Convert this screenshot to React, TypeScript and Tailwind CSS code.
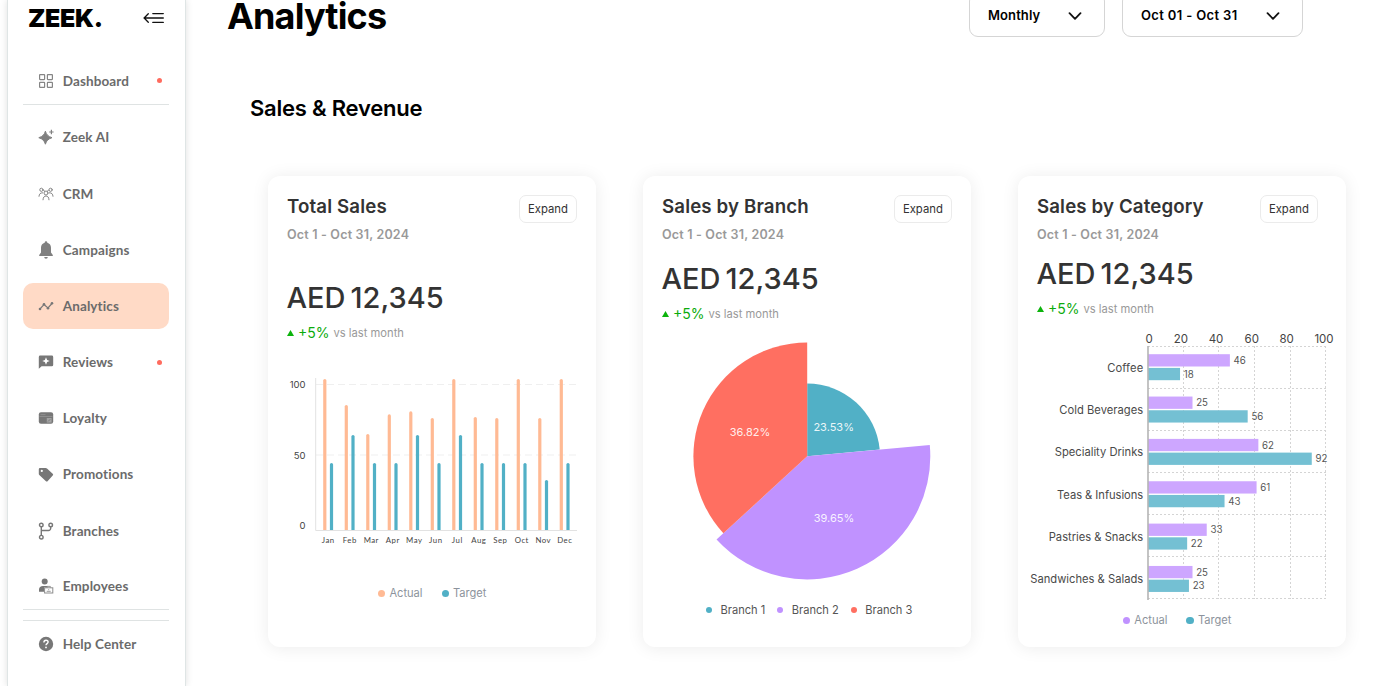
import type { ReactNode } from 'react';

interface NavEntry {
  label: string;
  icon: ReactNode;
  active?: boolean;
  dot?: boolean;
  line?: string;
}

const NAV: NavEntry[] = [
  {
    label: 'Dashboard',
    dot: true,
    line: 'border-b border-[#dfe3e3]',
    icon: (
      <g fill="none" stroke="#858585" strokeWidth="1.2">
        <rect x="1.6" y="1.6" width="5" height="5" rx="0.5" />
        <rect x="9.4" y="1.6" width="5" height="5" rx="0.5" />
        <rect x="1.6" y="9.4" width="5" height="5" rx="0.5" />
        <rect x="9.4" y="9.4" width="5" height="5" rx="0.5" />
      </g>
    ),
  },
  {
    label: 'Zeek AI',
    icon: (
      <g fill="#808080">
        <path d="M7.4 2.2C8.4 5.6 10 7.400 14 8.700 10 10 8.400 11.800 7.400 15.200 6.400 11.800 4.800 10 .8 8.700 4.800 7.400 6.400 5.600 7.400 2.200z" stroke="#808080" strokeWidth="1" strokeLinejoin="round" />
        <path d="M12.800.8h1.200v1.600h1.600v1.200h-1.600v1.600h-1.200V3.600h-1.600V2.400h1.600z" />
      </g>
    ),
  },
  {
    label: 'CRM',
    icon: (
      <g fill="none" stroke="#858585" strokeWidth="1" strokeLinecap="round">
        <circle cx="3.400" cy="3.800" r="1.600" />
        <circle cx="12.600" cy="3.800" r="1.600" />
        <circle cx="8" cy="7" r="2" />
        <path d="M1 10.300C1.200 7.800 2.200 6.800 4.600 6.800M15 10.300C14.800 7.800 13.800 6.800 11.400 6.800M5 13.800c.2-2.600 1.200-3.800 3-3.800s2.800 1.200 3 3.800M5.500 4.300 6.800 5.300M10.500 4.300 9.200 5.300" />
      </g>
    ),
  },
  {
    label: 'Campaigns',
    icon: (
      <g fill="#808080">
        <path d="M8-.7a1.300 1.300 0 0 1 1.300 1.400C11.700 1.300 13 3.200 13 5.800v4.600l1.800 2.500v1.100H1.200v-1.100L3 10.400V5.800C3 3.200 4.300 1.300 6.700.7A1.300 1.300 0 0 1 8-.7zM6.200 15h3.600a1.800 1.800 0 0 1-3.600 0z" />
      </g>
    ),
  },
  {
    label: 'Analytics',
    active: true,
    icon: (
      <g fill="#777">
        <path d="M2 10.900 6 6.500 10 10 14 5.500" fill="none" stroke="#777" strokeWidth="1.200" />
        <circle cx="2" cy="11" r="1.300" />
        <circle cx="6" cy="6.300" r="1.300" />
        <circle cx="10" cy="10.200" r="1.300" />
        <circle cx="14" cy="5.300" r="1.300" />
      </g>
    ),
  },
  {
    label: 'Reviews',
    dot: true,
    icon: (
      <path
        fill="#777"
        fillRule="evenodd"
        d="M2.200 1.500h11.600a1.400 1.400 0 0 1 1.400 1.400v8a1.400 1.400 0 0 1-1.400 1.400H3.600L.8 14.800V2.900a1.400 1.400 0 0 1 1.400-1.400zM8 3.300 6.900 5.900 4.300 7l2.600 1.100L8 10.700l1.100-2.600L11.700 7 9.100 5.900z"
      />
    ),
  },
  {
    label: 'Loyalty',
    icon: (
      <g>
        <rect x="0.8" y="2.200" width="14.400" height="11.600" rx="2.200" fill="#777" />
        <path d="M2.500 4.600h5M1.500 6.500h13" stroke="#999" strokeWidth="0.700" />
        <rect x="8.800" y="8" width="4.800" height="4.600" fill="#a3a3a3" />
        <path d="m10 11.500 2.300-2.300" stroke="#777" strokeWidth="0.900" />
      </g>
    ),
  },
  {
    label: 'Promotions',
    icon: (
      <path
        fill="#777"
        fillRule="evenodd"
        d="M2 1h5.700a2 2 0 0 1 1.300.5l5.700 5.200a1.200 1.200 0 0 1 0 1.800L9.800 14a1.500 1.500 0 0 1-2.100 0L1.300 8A1.500 1.500 0 0 1 .8 7V2.200A1.200 1.200 0 0 1 2 1zm1.800 1.800a1.100 1.100 0 1 0 0 2.200 1.100 1.100 0 0 0 0-2.200z"
      />
    ),
  },
  {
    label: 'Branches',
    icon: (
      <g fill="none" stroke="#777" strokeWidth="1.400">
        <circle cx="3.300" cy="2" r="1.800" />
        <circle cx="12.700" cy="2" r="1.800" />
        <circle cx="3.300" cy="14.200" r="1.800" />
        <path d="M3.300 3.800v8.600M12.700 3.800v1.500a2.200 2.200 0 0 1-2.200 2.200H3.300" />
      </g>
    ),
  },
  {
    label: 'Employees',
    line: 'border-b border-[#dfe3e3]',
    icon: (
      <g fill="#777">
        <circle cx="6.700" cy="3.500" r="3" />
        <path d="M1 13.700v-2.200C1 9.200 2.600 8 5 8h4.500v1.500H6v4.200z" />
        <rect x="6.600" y="9.800" width="8.200" height="5.200" fill="#fff" stroke="#8c8c8c" />
        <path d="M9 9.500V8.400h3.400v1.100M8.700 13.300h4M10.200 11.700h1" fill="none" stroke="#8c8c8c" strokeWidth="0.900" />
      </g>
    ),
  },
  {
    label: 'Help Center',
    line: 'border-t border-[#dfe3e3]',
    icon: (
      <g>
        <circle cx="8" cy="8" r="7.200" fill="#777" />
        <path d="M5.900 6.500C5.900 5 6.800 4.200 8 4.200s2.100.8 2.100 1.900c0 1.500-2.100 1.600-2.100 3.200" fill="none" stroke="#fff" strokeWidth="1.400" />
        <circle cx="8" cy="11.400" r="0.900" fill="#fff" />
      </g>
    ),
  },
];

const MONTHS = [
  { name: 'Jan', actual: 379, target: 463 },
  { name: 'Feb', actual: 405, target: 435 },
  { name: 'Mar', actual: 434, target: 463 },
  { name: 'Apr', actual: 414.4, target: 463 },
  { name: 'May', actual: 411.4, target: 435 },
  { name: 'Jun', actual: 418, target: 463 },
  { name: 'Jul', actual: 379, target: 435 },
  { name: 'Aug', actual: 417, target: 463 },
  { name: 'Sep', actual: 418, target: 463 },
  { name: 'Oct', actual: 379, target: 463 },
  { name: 'Nov', actual: 418, target: 480 },
  { name: 'Dec', actual: 379, target: 463 },
];

const CATEGORIES = [
  { name: 'Coffee', width: 36, actual: 46, target: 18 },
  { name: 'Cold Beverages', width: 84, actual: 25, target: 56 },
  { name: 'Speciality Drinks', width: 88.4, actual: 62, target: 92 },
  { name: 'Teas & Infusions', width: 86.2, actual: 61, target: 43 },
  { name: 'Pastries & Snacks', width: 94.5, actual: 33, target: 22 },
  { name: 'Sandwiches & Salads', width: 113, actual: 25, target: 23 },
];

const AXIS_TICKS = [
  { value: 0, x: 1149.2 },
  { value: 20, x: 1181 },
  { value: 40, x: 1216 },
  { value: 60, x: 1251.7 },
  { value: 80, x: 1286.7 },
  { value: 100, x: 1324 },
];

function Sidebar() {
  return (
    <aside className="ml-[7px] flex w-[179px] shrink-0 flex-col border-x border-[#dfe5e5] bg-white shadow-[0_0_7px_rgba(0,0,0,0.13)]">
      <div className="flex h-9 items-center justify-between pr-[21px] pl-5">
        <span className="text-[25px] leading-9 font-black tracking-[-0.3px] text-black">ZEEK.</span>
        <svg className="h-4 w-[21px]" viewBox="0 0 21 16" fill="none" stroke="#111" strokeWidth="1.300" strokeLinecap="round">
          <path d="M9.800 3.600H20.300M1.300 8h19M9.800 12.400h10.500M5.300 3.800 1.100 8l4.200 4.200" />
        </svg>
      </div>

      <nav className="mt-[22px] ml-[15px] flex w-[145.5px] flex-col gap-[9.7px]">
        {NAV.map((item) => (
          <a
            key={item.label}
            className={`flex h-[46.5px] items-center pr-[6.5px] pl-[15.4px] ${item.line ?? ''} ${
              item.active ? 'rounded-[10px] bg-[#ffdac6]' : ''
            }`}
          >
            <svg className="h-4 w-4 shrink-0 overflow-visible" viewBox="0 0 16 16">
              {item.icon}
            </svg>
            <span className="ml-[8.3px] flex-1 font-['Lato',sans-serif] text-[13.5px] font-bold tracking-[0.12px] whitespace-nowrap text-[#6b6b6b]">
              {item.label}
            </span>
            {item.dot && <span className="h-[5px] w-[5px] rounded-full bg-[#ff6b5e]" />}
          </a>
        ))}
      </nav>
    </aside>
  );
}

function Dropdown({ label, className }: { label: string; className: string }) {
  return (
    <button className={`flex h-[45px] items-center justify-between rounded-[9px] border border-[#d5d5d5] pt-[2px] pl-[18px] ${className}`}>
      <span className="text-[13px] font-semibold whitespace-nowrap text-black">{label}</span>
      <svg className="h-2 w-[14px]" viewBox="0 0 14 8" fill="none" stroke="#111" strokeWidth="1.800" strokeLinecap="round" strokeLinejoin="round">
        <path d="m1.500 1.200 5.500 5.600 5.500-5.600" />
      </svg>
    </button>
  );
}

interface CardProps {
  title: string;
  buttonPad: string;
  amountGap: string;
  children: ReactNode;
}

function Card({ title, buttonPad, amountGap, children }: CardProps) {
  return (
    <section className="flex h-[471px] w-[328.400px] shrink-0 flex-col rounded-[12px] bg-white pt-[19px] shadow-[0_1px_17px_rgba(0,0,0,0.08)]">
      <div className={`flex items-start justify-between pl-[19px] ${buttonPad}`}>
        <div>
          <h3 className="h-6 text-[18.7px] leading-6 font-semibold tracking-[0.13px] whitespace-nowrap text-[#333]">{title}</h3>
          <p className="mt-[8px] h-4 text-[12.500px] leading-4 font-semibold tracking-[0.19px] whitespace-nowrap text-[#999]">
            Oct 1 - Oct 31, 2024
          </p>
        </div>
        <button className="h-7 w-[58px] rounded-[7px] border border-[#ebebeb] pt-px text-[11.300px] text-[#333]">
          Expand
        </button>
      </div>
      <p className={`h-9 pt-px pl-[18.5px] text-[29px] leading-9 font-medium tracking-[0.02px] [word-spacing:-2.8px] whitespace-nowrap text-[#333] ${amountGap}`}>
        AED 12,345
      </p>
      <div className="mt-2 flex h-5 items-center pl-[19px]">
        <svg className="h-[6px] w-[7px]" viewBox="0 0 7 6">
          <path d="M3.500 0 7 6H0z" fill="#0cb30c" />
        </svg>
        <span className="ml-[4px] text-[14px] leading-5 text-[#0cab0c]">+5%</span>
        <span className="ml-[4px] text-[11.200px] leading-5 whitespace-nowrap text-[#999]">vs last month</span>
      </div>
      {children}
    </section>
  );
}

function Legend({ items, className }: { items: { label: string; color: string }[]; className: string }) {
  return (
    <div className={`flex h-[27px] items-center justify-center text-[11.100px] ${className}`}>
      {items.map((item) => (
        <span key={item.label} className="flex items-center whitespace-nowrap">
          <span className={`h-[7.500px] w-[7.500px] rounded-full ${item.color}`} />
          {item.label}
        </span>
      ))}
    </div>
  );
}

function MonthlyChart() {
  return (
    <svg className="h-[237px] w-[329px] shrink-0" viewBox="268 343 329 237">
      <path d="M316 384.500H577M316 455H577" stroke="#efefef" strokeWidth="1.200" strokeDasharray="7 4" />
      <path d="M315.700 378V530.500H577" fill="none" stroke="#e2e2e2" />
      <g fontSize="9.500" fill="#444" textAnchor="end">
        <text x="305.500" y="388.300">100</text>
        <text x="305.500" y="458.700">50</text>
        <text x="305.500" y="529">0</text>
      </g>
      {MONTHS.map((m, i) => (
        <g key={m.name}>
          <path d={`M${323.2 + i * 21.5} 530V${m.actual + 1.5}a1.600 1.600 0 0 1 3.200 0V530z`} fill="#ffba94" />
          <path d={`M${329.9 + i * 21.5} 530V${m.target + 1.5}a1.600 1.600 0 0 1 3.200 0V530z`} fill="#51b0c6" />
          <text x={328.3 + i * 21.5} y="543" textAnchor="middle" fontSize="7.800" letterSpacing="0.500" fill="#444" className="font-['Lato',sans-serif]">
            {m.name}
          </text>
        </g>
      ))}
    </svg>
  );
}

function slice(radius: number, from: number, to: number) {
  const point = (share: number) => {
    const angle = share * 2 * Math.PI;
    return `${807.2 + radius * Math.sin(angle)} ${456.3 - radius * Math.cos(angle)}`;
  };
  return `M807.2 456.3L${point(from)}A${radius} ${radius} 0 0 1 ${point(to)}Z`;
}

function BranchChart() {
  return (
    <svg className="h-[272px] w-[329px] shrink-0" viewBox="643 324 329 272">
      <path d={slice(72.8, 0, 0.2353)} fill="#51b0c6" />
      <path d={slice(123.1, 0.2353, 0.6318)} fill="#c092ff" />
      <path d={slice(113.8, 0.6318, 1)} fill="#ff6f61" />
      <g fontSize="11" fill="#fff" fillOpacity="0.900" textAnchor="middle">
        <text x="833.700" y="431.300">23.53%</text>
        <text x="834" y="522.200">39.65%</text>
        <text x="750" y="435.500">36.82%</text>
      </g>
    </svg>
  );
}

function CategoryChart() {
  return (
    <svg className="h-[288px] w-[329px] shrink-0" viewBox="1018 319 329 288">
      <g stroke="#d4d4d4" strokeDasharray="2 2">
        {[0, 1, 2, 3, 4, 5, 6].map((i) => (
          <path key={i} d={`M1148 ${Math.round(346 + i * 42.05) + 0.5}H1326`} />
        ))}
        {[1, 2, 3, 4, 5].map((i) => (
          <path key={i} d={`M${Math.floor(1147.7 + i * 35.6) + 0.5} 346V599`} />
        ))}
      </g>
      <g fontSize="11.500" fill="#444" textAnchor="middle">
        {AXIS_TICKS.map((t) => (
          <text key={t.value} x={t.x} y="343.400">{t.value}</text>
        ))}
      </g>
      {CATEGORIES.map((c, i) => {
        const y = 354.2 + i * 42.35;
        return (
          <g key={c.name}>
            <rect x="1148" y={y} width={c.actual * 1.78} height="12.300" fill="#cda6ff" />
            <rect x="1148" y={y + 13.7} width={c.target * 1.78} height="12.300" fill="#74c0d3" />
            <text x={1143.2 - c.width} y={y + 17.3} textLength={c.width} fontSize="11.200" fill="#4a4a4a">{c.name}</text>
            <text x={1151.7 + c.actual * 1.78} y={y + 9.8} fontSize="9.700" fill="#555">{c.actual}</text>
            <text x={1151.7 + c.target * 1.78} y={y + 23.4} fontSize="9.700" fill="#555">{c.target}</text>
          </g>
        );
      })}
      <path d="M1148 346V600" stroke="#b5b5b5" strokeWidth="1.600" />
    </svg>
  );
}

export default function App() {
  return (
    <div className="flex h-[686px] w-[1376px] overflow-hidden bg-white font-['Inter',sans-serif]">
      <Sidebar />

      <main className="min-w-0 flex-1">
        {/* Heading and filters: the filter boxes run past the top edge */}
        <div className="flex h-[37px] items-end justify-between pr-[73px] pl-[41px]">
          <h1 className="mb-[5px] text-[36px] leading-[32px] font-bold tracking-[-0.85px] text-black">Analytics</h1>
          <div className="flex gap-[17px]">
            <Dropdown label="Monthly" className="w-[136px] pr-[22px] tracking-[0.1px]" />
            <Dropdown label="Oct 01 - Oct 31" className="w-[181px] pr-[22px] tracking-[0.35px]" />
          </div>
        </div>

        <h2 className="mt-[55px] ml-16 h-8 text-[22px] leading-8 font-semibold tracking-[-0.22px] text-black">
          Sales &amp; Revenue
        </h2>

        <div className="mt-[52px] ml-[82px] flex gap-[46.6px]">
          <Card title="Total Sales" buttonPad="pr-[19.5px]" amountGap="mt-9">
            <MonthlyChart />
            <Legend
              className="gap-[19px] text-[#8c939c] [&>span]:gap-1"
              items={[
                { label: 'Actual', color: 'bg-[#ffba94]' },
                { label: 'Target', color: 'bg-[#51b0c6]' },
              ]}
            />
          </Card>
          <Card title="Sales by Branch" buttonPad="pr-[19.5px]" amountGap="mt-[17px]">
            <BranchChart />
            <Legend
              className="gap-3 pt-px pl-1 text-[#555] [&>span]:gap-[8.500px] [&>span>span]:h-[6px] [&>span>span]:w-[6px]"
              items={[
                { label: 'Branch 1', color: 'bg-[#51b0c6]' },
                { label: 'Branch 2', color: 'bg-[#c092ff]' },
                { label: 'Branch 3', color: 'bg-[#ff6f61]' },
              ]}
            />
          </Card>
          <Card title="Sales by Category" buttonPad="pr-[28.5px]" amountGap="mt-3">
            <CategoryChart />
            <Legend
              className="gap-[19px] pr-[10px] text-[#8c939c] [&>span]:gap-1"
              items={[
                { label: 'Actual', color: 'bg-[#c092ff]' },
                { label: 'Target', color: 'bg-[#51b0c6]' },
              ]}
            />
          </Card>
        </div>
      </main>
    </div>
  );
}
